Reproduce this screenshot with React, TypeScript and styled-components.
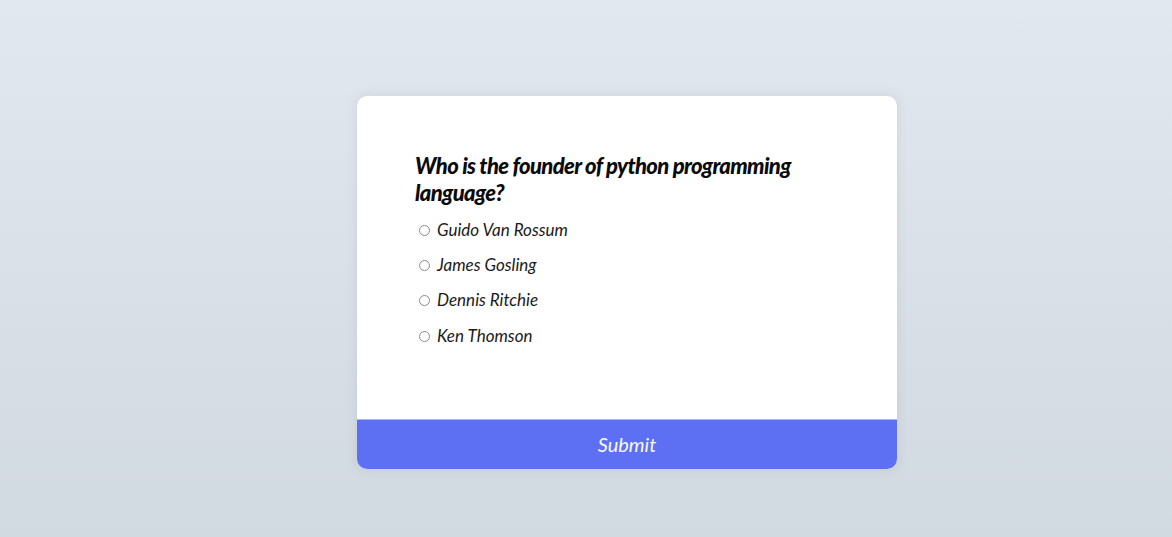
import React, { useState } from 'react';
import styled, { createGlobalStyle } from 'styled-components';

const GlobalStyle = createGlobalStyle`
  html, body {
    margin: 0;
    padding: 0;
  }
  body {
    font-family: Lato, "Liberation Sans", sans-serif;
    background: linear-gradient(to bottom, #e2e8ef 0%, #d1d9e1 100%);
    min-height: 100vh;
  }
`;

const Page = styled.main`
  min-height: 100vh;
  box-sizing: border-box;
  padding: 96px 0 0 357px;
`;

const QuizCard = styled.div`
  width: 540px;
  background-color: #ffffff;
  border-radius: 10px;
  box-shadow: 0 0 10px 2px rgba(100, 100, 100, 0.1);
  overflow: hidden;
`;

const QuizHeader = styled.div`
  padding: 56px 58px 73px;
`;

const Question = styled.h2`
  margin: 0 0 14px;
  font-size: 22px;
  line-height: 27px;
  font-weight: 900;
  font-style: italic;
  color: #0a0a0a;
  letter-spacing: -0.63px;
`;

const Options = styled.ul`
  list-style: none;
  margin: 0;
  padding: 0;
  display: flex;
  flex-direction: column;
  gap: 15px;
`;

const Option = styled.li`
  display: flex;
  align-items: center;
  font-size: 17px;
  line-height: 20px;
  font-style: italic;
  color: #1a1a1a;

  &:last-child {
    margin-top: 1px;
  }
`;

const Radio = styled.input`
  width: 11px;
  height: 11px;
  margin: 0 7px 0 4px;
  appearance: none;
  border: 1px solid #8a8a8a;
  border-radius: 50%;
  background: #fff;

  &:checked {
    background: radial-gradient(circle, #5e70f3 45%, #fff 50%);
    border-color: #5e70f3;
  }
`;

const SubmitButton = styled.button`
  display: block;
  width: 100%;
  height: 50px;
  padding: 0 0 1px;
  border: none;
  border-top: 1px solid #a9b4f7;
  background-color: #5d70f3;
  color: #f7f8ff;
  font-family: Lato, "Liberation Sans", sans-serif;
  font-size: 20px;
  font-style: italic;
  cursor: pointer;
`;

const answers = ['Guido Van Rossum', 'James Gosling', 'Dennis Ritchie', 'Ken Thomson'];

const App = () => {
  const [selected, setSelected] = useState<string | null>(null);

  return (
    <>
      <GlobalStyle />
      <Page>
        <QuizCard>
          <QuizHeader>
            <Question>Who is the founder of python programming language?</Question>
            <Options>
              {answers.map((a) => (
                <Option key={a}>
                  <Radio
                    type="radio"
                    name="answer"
                    id={a}
                    checked={selected === a}
                    onChange={() => setSelected(a)}
                  />
                  <label htmlFor={a}>{a}</label>
                </Option>
              ))}
            </Options>
          </QuizHeader>
          <SubmitButton type="button">Submit</SubmitButton>
        </QuizCard>
      </Page>
    </>
  );
};

export default App;
